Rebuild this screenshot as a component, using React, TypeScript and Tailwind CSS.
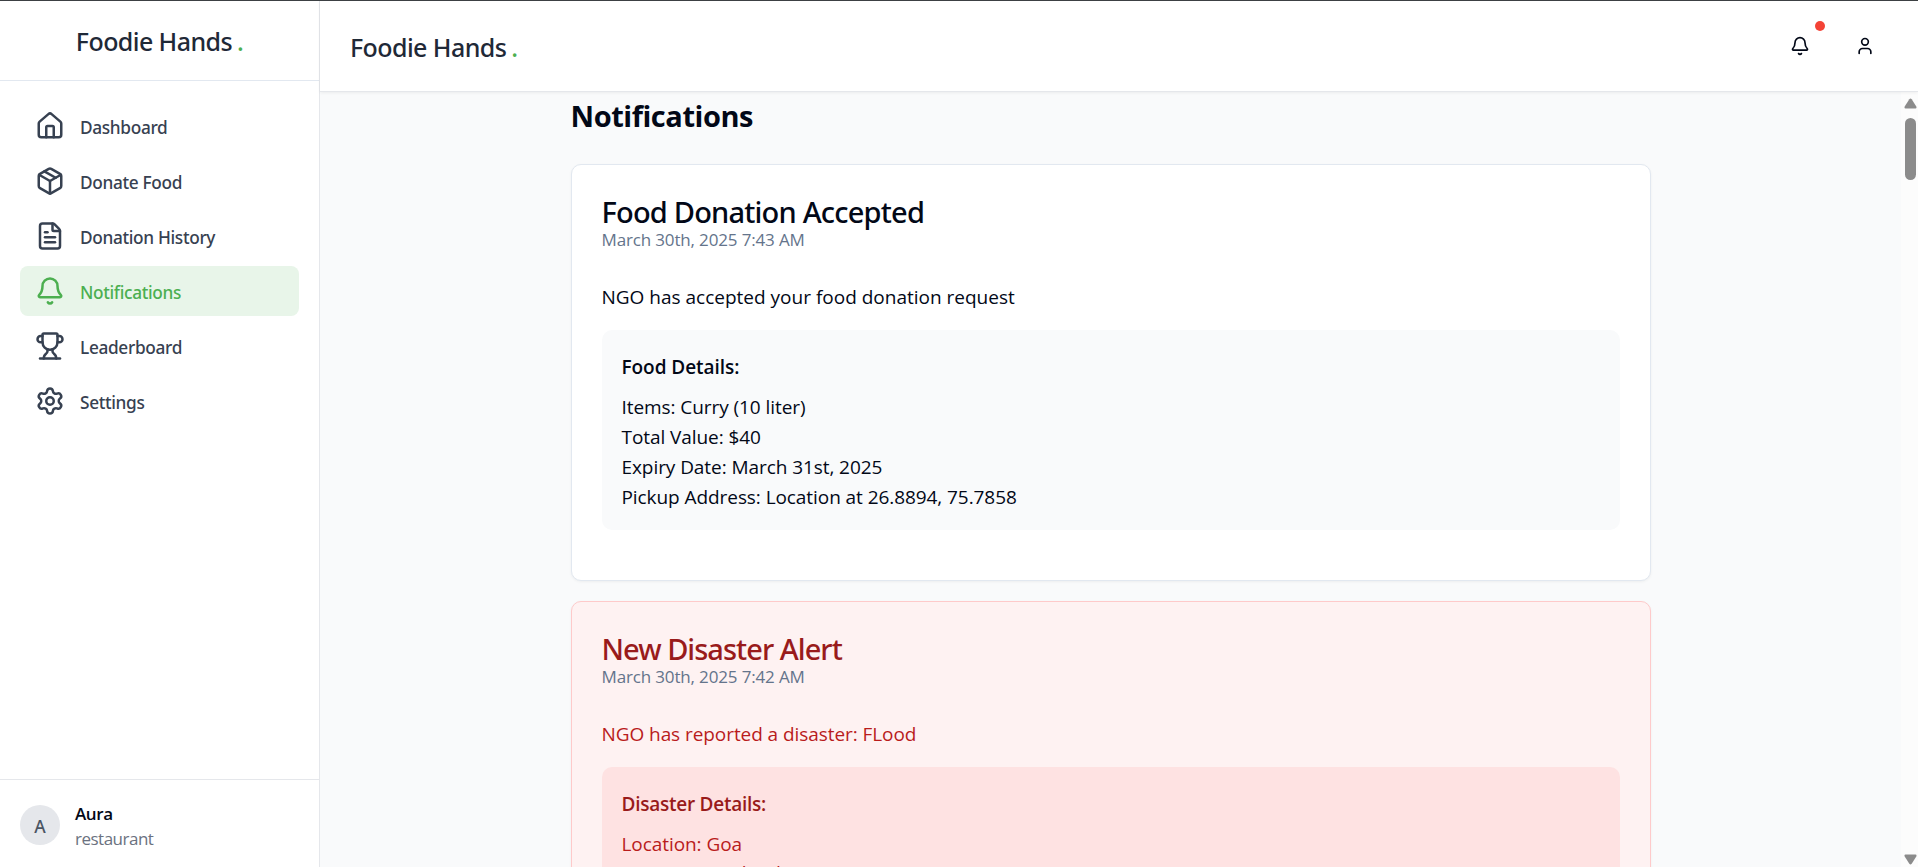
import { Bell, FileText, House, Package, Settings, Trophy, User } from "lucide-react";
import type { LucideIcon } from "lucide-react";

const nav: { label: string; icon: LucideIcon; active?: boolean }[] = [
  { label: "Dashboard", icon: House },
  { label: "Donate Food", icon: Package },
  { label: "Donation History", icon: FileText },
  { label: "Notifications", icon: Bell, active: true },
  { label: "Leaderboard", icon: Trophy },
  { label: "Settings", icon: Settings },
];

function Brand() {
  return (
    <span className="font-['Noto_Sans',sans-serif] whitespace-nowrap text-[25px] leading-[35px] font-medium tracking-[-0.58px] text-[#1f2937]">
      Foodie Hands <span className="-ml-px text-[#4caf50]">.</span>
    </span>
  );
}

function Sidebar() {
  return (
    <aside className="flex w-[320px] shrink-0 flex-col border-r border-[#e5e7eb] bg-white">
      <div className="flex h-[80px] items-center justify-center border-b border-[#e2e8f0] pt-[2px]">
        <Brand />
      </div>
      <nav className="flex flex-1 flex-col gap-[5px] px-5 pt-5">
        {nav.map(({ label, icon: Icon, active }) => (
          <a
            key={label}
            className={
              active
                ? "flex h-[50px] items-center gap-[15px] rounded-[8px] bg-[#e8f5e9] px-[15px] text-[#4caf50]"
                : "flex h-[50px] items-center gap-[15px] rounded-[8px] px-[15px] text-[#374151]"
            }
          >
            <Icon className="size-[30px]" strokeWidth={2} />
            <span className="pt-[2px] font-['Noto_Sans',sans-serif] text-[17.25px] leading-[25px] font-medium tracking-[-0.33px]">
              {label}
            </span>
          </a>
        ))}
      </nav>
      <div className="flex h-[88px] items-center gap-[15px] border-t border-[#e5e7eb] px-5 pt-[3px]">
        <div className="flex size-10 items-center justify-center rounded-full bg-[#e5e7eb] pt-0.5 font-['Noto_Sans',sans-serif] text-[17.5px] font-medium text-[#4b5563]">
          A
        </div>
        <div className="flex flex-col pt-[2px]">
          <span className="text-[17px] leading-[25px] font-semibold tracking-[-0.4px] text-[#020817]">Aura</span>
          <span className="text-[17px] leading-[25px] tracking-[-0.5px] text-[#6b7280]">restaurant</span>
        </div>
      </div>
    </aside>
  );
}

function TopBar() {
  return (
    <header className="z-10 flex h-[91px] shrink-0 items-center justify-between border-b border-[#e5e7eb] bg-white pr-[43px] pl-[30px] shadow-[0_1px_3px_rgba(0,0,0,0.06)]">
      <div className="pt-[2px]">
        <Brand />
      </div>
      <div className="flex items-center gap-[45px]">
        <div className="relative">
          <Bell className="size-5 text-[#020817]" strokeWidth={2} />
          <span className="absolute -top-[15px] left-[25px] size-[10px] rounded-full bg-[#f44336]" />
        </div>
        <User className="size-5 text-[#020817]" strokeWidth={2} />
      </div>
    </header>
  );
}

interface Notice {
  title: string;
  time: string;
  message: string;
  heading: string;
  lines: string[];
  alert?: boolean;
}

const notices: Notice[] = [
  {
    title: "Food Donation Accepted",
    time: "March 30th, 2025 7:43 AM",
    message: "NGO has accepted your food donation request",
    heading: "Food Details:",
    lines: [
      "Items: Curry (10 liter)",
      "Total Value: $40",
      "Expiry Date: March 31st, 2025",
      "Pickup Address: Location at 26.8894, 75.7858",
    ],
  },
  {
    title: "New Disaster Alert",
    time: "March 30th, 2025 7:42 AM",
    message: "NGO has reported a disaster: FLood",
    heading: "Disaster Details:",
    lines: ["Location: Goa", "Description: Flood in"],
    alert: true,
  },
];

function NoticeCard({ title, time, message, heading, lines, alert }: Notice) {
  return (
    <article
      className={
        alert
          ? "rounded-[10px] border border-[#fecaca] bg-[#fef2f2] p-[30px] text-[#b91c1c] shadow-[0_1px_3px_rgba(0,0,0,0.05)]"
          : "rounded-[10px] border border-[#e2e8f0] bg-white p-[30px] text-[#020817] shadow-[0_1px_3px_rgba(0,0,0,0.05)]"
      }
    >
      <h2
        className={
          alert
            ? "pt-[2px] font-['Noto_Sans',sans-serif] text-[29px] leading-[30px] font-medium tracking-[-0.97px] text-[#991b1b]"
            : "pt-[2px] font-['Noto_Sans',sans-serif] text-[29px] leading-[30px] font-medium tracking-[-0.8px]"
        }
      >
        {title}
      </h2>
      <p className="text-[17px] leading-[25px] tracking-[-0.15px] text-[#64748b]">{time}</p>
      <p className={alert ? "mt-[30px] text-[19px] leading-[30px] tracking-[-0.07px]" : "mt-[30px] text-[19px] leading-[30px]"}>
        {message}
      </p>
      <section
        className={
          alert
            ? "mt-[18px] mb-5 rounded-[10px] bg-[#fee2e2] px-5 pt-[22px] pb-[18px]"
            : "mt-[18px] mb-5 rounded-[10px] bg-[#f9fafb] px-5 pt-[22px] pb-[18px]"
        }
      >
        <h3
          className={
            alert
              ? "mb-[10px] text-[19px] leading-[30px] font-semibold tracking-[-0.25px] text-[#991b1b]"
              : "mb-[10px] text-[19px] leading-[30px] font-semibold tracking-[-0.05px]"
          }
        >
          {heading}
        </h3>
        {lines.map((line) => (
          <p
            key={line}
            className={
              alert
                ? "text-[19px] leading-[30px] tracking-[-0.07px] last:-mt-px"
                : "text-[19px] leading-[30px] tracking-[-0.07px]"
            }
          >
            {line}
          </p>
        ))}
      </section>
    </article>
  );
}

function ScrollBar() {
  return (
    <div className="flex w-[17px] shrink-0 flex-col items-center bg-[#fcfcfc] pt-[6px] pb-[2px] pl-[2px]">
      <svg className="h-[11px] w-[13px]" viewBox="0 0 13 11" fill="#8b8b8b">
        <path d="M5.3 1.2Q6.5-.4 7.7 1.2L12.3 8.6Q13 10.5 11.5 10.5H1.5Q0 10.5.7 8.6Z" />
      </svg>
      <div className="mt-[9px] h-[62px] w-[11px] rounded-full bg-[#8b8b8b]" />
      <div className="flex-1" />
      <svg className="h-[11px] w-[13px]" viewBox="0 0 13 11" fill="#8b8b8b">
        <path d="M5.3 9.8Q6.5 11.4 7.7 9.8L12.3 2.4Q13 .5 11.5 .5H1.5Q0 .5.7 2.4Z" />
      </svg>
    </div>
  );
}

export default function App() {
  return (
    <div className="flex h-[867px] w-full overflow-hidden border-t border-[#3c4043] bg-[#f9fafb] font-['Open_Sans',sans-serif]">
      <Sidebar />
      <div className="flex min-w-0 flex-1 flex-col">
        <TopBar />
        <div className="flex min-h-0 flex-1">
          <main className="min-w-0 flex-1 overflow-hidden">
            <div className="mx-auto flex w-[1080px] flex-col">
              <h1 className="mt-[4px] mb-[28px] text-[29px] leading-[40px] font-bold tracking-[-0.45px] text-[#020817]">
                Notifications
              </h1>
              <div className="flex flex-col gap-5">
                {notices.map((n) => (
                  <NoticeCard key={n.title} {...n} />
                ))}
              </div>
            </div>
          </main>
          <ScrollBar />
        </div>
      </div>
    </div>
  );
}
